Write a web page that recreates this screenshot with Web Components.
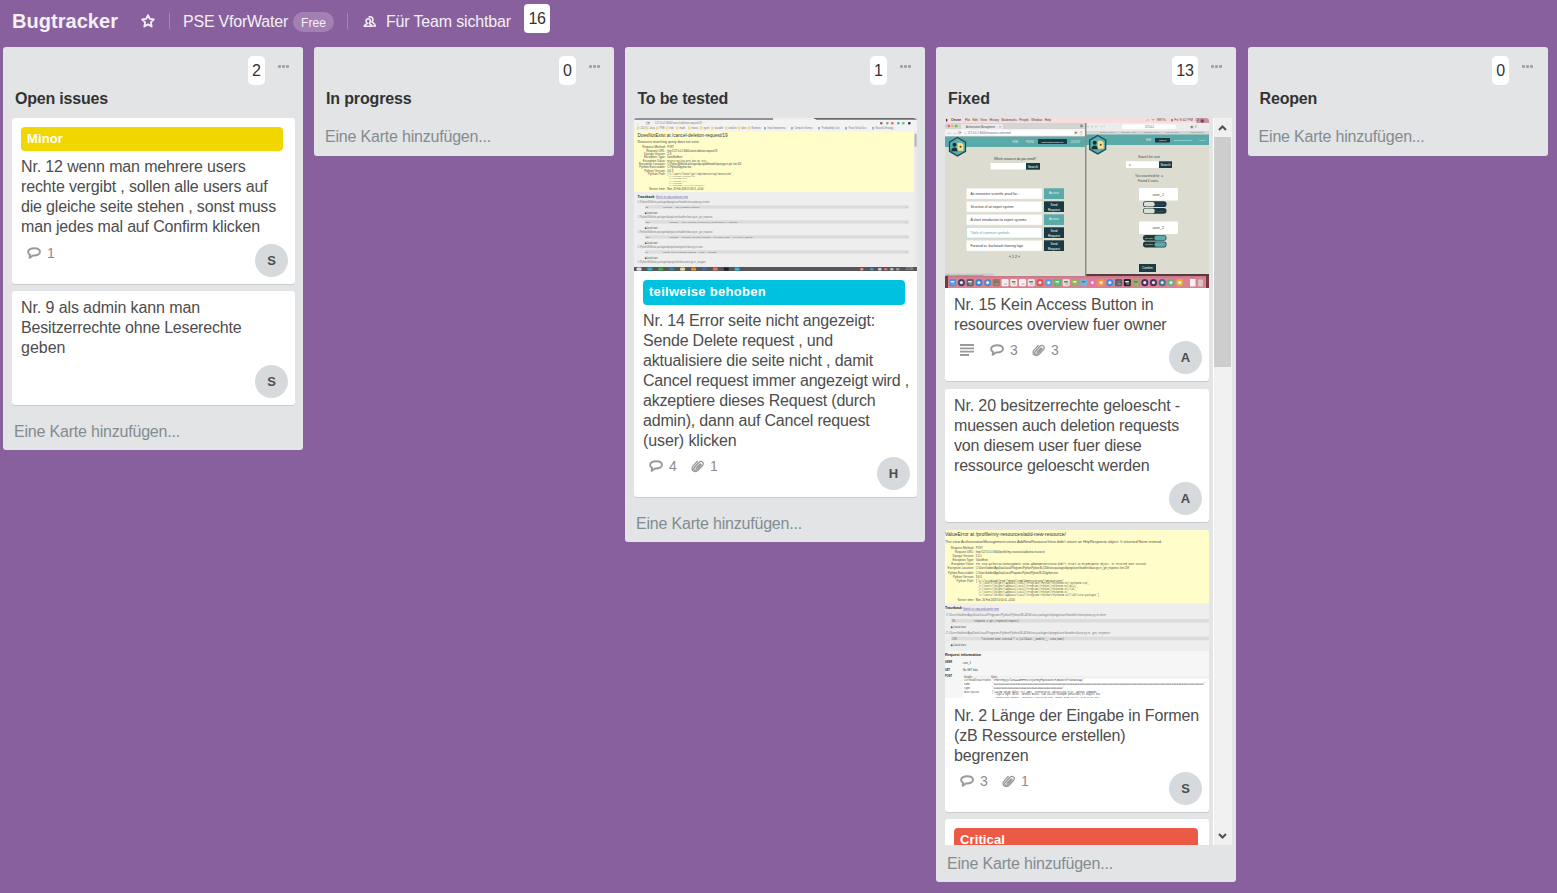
<!DOCTYPE html>
<html lang="de">
<head>
<meta charset="utf-8">
<title>Bugtracker</title>
<style>
html,body{margin:0;height:100%}
body{background:#89609e;font:16px/20px "Liberation Sans",Arial,sans-serif;color:#4d4d4d;overflow:hidden}
</style>
</head>
<body>
<bug-board>
  <board-header slot="header"></board-header>
  <board-list heading="Open issues" hw="93" count="2">
    <board-card h="166" gap="7" label="Minor" lw="36" color="#f2d600" comments="1" member="S">
      <fit-text w="224.5">Nr. 12 wenn man mehrere users</fit-text>
      <fit-text w="246.5">rechte vergibt , sollen alle users auf</fit-text>
      <fit-text w="255">die gleiche seite stehen , sonst muss</fit-text>
      <fit-text w="239">man jedes mal auf Confirm klicken</fit-text>
    </board-card>
    <board-card h="114" member="S">
      <fit-text w="179">Nr. 9 als admin kann man</fit-text>
      <fit-text w="220.5">Besitzerrechte ohne Leserechte</fit-text>
      <fit-text w="44.5">geben</fit-text>
    </board-card>
  </board-list>
  <board-list heading="In progress" hw="85.5" count="0" empty></board-list>
  <board-list heading="To be tested" hw="90.5" count="1" tx="1">
    <board-card h="379" label="teilweise behoben" lw="117" color="#00c2e0" comments="4" files="1" member="H">
      <thumb-deletion slot="cover"></thumb-deletion>
      <fit-text w="232">Nr. 14 Error seite nicht angezeigt:</fit-text>
      <fit-text w="190">Sende Delete request , und</fit-text>
      <fit-text w="230">aktualisiere die seite nicht , damit</fit-text>
      <fit-text w="266">Cancel request immer angezeigt wird ,</fit-text>
      <fit-text w="232.5">akzeptiere dieses Request (durch</fit-text>
      <fit-text w="226.5">admin), dann auf Cancel request</fit-text>
      <fit-text w="93.500">(user) klicken</fit-text>
    </board-card>
  </board-list>
  <board-list heading="Fixed" hw="42" count="13" scroll>
    <board-card h="263" description comments="3" files="3" member="A">
      <thumb-desktop slot="cover"></thumb-desktop>
      <fit-text w="199.5">Nr. 15 Kein Access Button in</fit-text>
      <fit-text w="212.5">resources overview fuer owner</fit-text>
    </board-card>
    <board-card h="133" member="A">
      <fit-text w="226">Nr. 20 besitzerrechte geloescht -</fit-text>
      <fit-text w="225">muessen auch deletion requests</fit-text>
      <fit-text w="187.5">von diesem user fuer diese</fit-text>
      <fit-text w="195.5">ressource geloescht werden</fit-text>
    </board-card>
    <board-card h="282" gap="7" comments="3" files="1" member="S">
      <thumb-value slot="cover"></thumb-value>
      <fit-text w="245">Nr. 2 Länge der Eingabe in Formen</fit-text>
      <fit-text w="171.5">(zB Ressource erstellen)</fit-text>
      <fit-text w="74.5">begrenzen</fit-text>
    </board-card>
    <board-card h="120" label="Critical" lw="45" color="#eb5a46"></board-card>
  </board-list>
  <board-list class="last" heading="Reopen" hw="57.5" count="0" empty></board-list>
</bug-board>
<script>
const shadow = (el, html) => { el.attachShadow({mode: 'open'}).innerHTML = html; };
const attr = (el, n) => el.getAttribute(n);

const star = `<svg width="16" height="16" viewBox="0 0 16 16"><path d="M8 2.1l1.8 3.8 4.1.5-3 2.9.8 4.2L8 11.4l-3.7 2.1.8-4.2-3-2.9 4.1-.5z" fill="none" stroke="#f4f0f6" stroke-width="1.8" stroke-linejoin="round"/></svg>`;
const people = `<svg width="14" height="12" viewBox="0 0 14 12"><g fill="none" stroke="#f4f0f6" stroke-width="1.6" stroke-linejoin="round"><path d="M5.600 1.300C7.200 .2 9.600 .8 9.900 3.200c.1 1.300-.3 2.100-.8 2.900 1.200.9 3 1.300 3.200 3.900H9.900"/><path d="M5.300 2.800c1.500 0 2.200 1 2.100 2.200-.1 1.200-.6 1.900-1.100 2.400.2 1 2.600.8 2.900 2.900H1.200c.3-2.100 2.500-1.900 3-2.900-.6-.5-1-1.200-1.100-2.400 0-1.200.7-2.200 2.200-2.200z"/></g></svg>`;
const comment = `<svg width="14" height="12" viewBox="0 0 14 12"><path d="M7.500 1.200C4 1.200 1.100 2.500 1.100 5c0 1.500.9 2.300 2 2.900L2.600 10.900l3.300-2.400c4.300.3 7.100-1.200 7.100-3.700C13 2.500 10.500 1.200 7.500 1.200z" fill="none" stroke="#999" stroke-width="1.900" stroke-linejoin="round"/></svg>`;
const clip = `<svg width="14" height="14" viewBox="0 0 14 14"><path d="M5 9.300L8.800 5.200c.5-.5 1.500.2 1 .9L5.700 10.700c-1.700 1.500-3.900-.4-2.400-2.200L8 3.300c2.500-2.200 5.500.5 3.500 3.200l-4.400 4.900c-2.600 2.600-6.800.7-5.900-2.900.1-.5.400-1 .8-1.400L6.200 2.500" fill="none" stroke="#999" stroke-width="1.300" stroke-linecap="round"/></svg>`;
const lines = `<svg width="14" height="12" viewBox="0 0 14 12"><path d="M0 1h14M0 4.300h14M0 7.700h14M0 11h9" stroke="#999" stroke-width="1.800"/></svg>`;

class BugBoard extends HTMLElement { constructor(){ super(); shadow(this, `
<style>:host{display:block;height:893px}
.lists{display:flex;align-items:flex-start;gap:11px;padding-left:3px;width:1560px;box-sizing:border-box}
::slotted(.last){margin-left:.6px}</style>
<slot name="header"></slot><div class="lists"><slot></slot></div>`); } }

class BoardHeader extends HTMLElement { constructor(){ super(); shadow(this, `
<style>:host{display:flex;height:47px;align-items:flex-start;color:#f4f0f6;padding-left:12px;box-sizing:border-box}
.t{padding-top:12px}h1{font-size:20px;line-height:20px;margin:0;padding-top:11px;width:128px}
svg{display:block}.star{margin-top:13px;width:29px}
i{width:1px;height:16px;margin-top:13px;background:#a487b4}
.free{margin:12px 13px 0 5px;width:41px;height:20px;border-radius:10px;background:#a280b3;font-size:12px;line-height:22px;display:flex;justify-content:center}
.people{margin:16px 9px 0 15px}
.count{margin:4px 0 0 13px;width:26px;height:29px;line-height:29px;border-radius:4px;background:#fff;color:#333;display:flex;justify-content:center}</style>
<h1><fit-text w="106">Bugtracker</fit-text></h1><span class="star">${star}</span><i></i>
<fit-text class="t" style="margin-left:13px" w="105">PSE VforWater</fit-text><span class="free"><fit-text w="25">Free</fit-text></span><i></i>
<span class="people">${people}</span><fit-text class="t" w="125">Für Team sichtbar</fit-text><span class="count"><fit-text w="17">16</fit-text></span>`); } }

class BoardList extends HTMLElement { constructor(){ super(); const sc = this.hasAttribute('scroll'); shadow(this, `
<style>:host{display:block;width:300px;flex:none;background:#e2e4e6;border-radius:3px}
header{height:71px;display:grid;grid-template-columns:1fr auto 38px;grid-template-rows:38px 1fr;align-items:start}
:host(.last) header{grid-template-columns:1fr auto 38.400px}
.count{margin-top:9px;height:29px;line-height:29px;padding:0 4px;border-radius:5px;background:#fff;color:#333}
.dots{display:flex;gap:1px;margin:18px 0 0 13px}.dots b{width:3px;height:3px;border-radius:1px;background:#a0a2a4}
h2{grid-column:1/-1;margin:4px 0 0 ${attr(this,'tx')?12.5:12}px;font-size:16px;line-height:20px;color:#333}
.body{display:flex;height:${sc?'727px':'auto'};overflow:hidden}
.cards{flex:1;min-width:0;padding:0 ${sc?4:8}px 0 9px}
.bar{width:19px;flex:none;padding-right:1px;margin-right:4px;background:#f0f0f0;display:flex;flex-direction:column;align-items:stretch;border-left:1px solid #fff;box-sizing:border-box}
.bar svg{display:block;height:19px}.thumb{height:230px;background:#cdcdcd}.bar .dn{margin-top:auto}
footer{height:${this.hasAttribute('empty')?29:28}px;padding:9px 0 0 11px;color:#838c91}</style>
<header><span></span><span class="count">${attr(this,'count')}</span><span class="dots"><b></b><b></b><b></b></span>
<h2><fit-text w="${attr(this,'hw')}">${attr(this,'heading')}</fit-text></h2></header>
<div class="body"><div class="cards"><slot></slot></div>
${sc?`<div class="bar"><svg viewBox="0 0 17 19"><path d="M5 12l3.500-3.500 3.500 3.500" fill="none" stroke="#505050" stroke-width="2"/></svg><div class="thumb"></div><svg class="dn" viewBox="0 0 17 19"><path d="M5 8l3.500 3.500L12 8" fill="none" stroke="#505050" stroke-width="2"/></svg></div>`:''}</div>
<footer><fit-text w="166">Eine Karte hinzufügen...</fit-text></footer>`); } }

class BoardCard extends HTMLElement { constructor(){ super(); const a = n => attr(this, n); shadow(this, `
<style>:host{display:flex;flex-direction:column;height:${a('h')}px;margin-bottom:${a('gap')||8}px;background:#fff;border-radius:3px;box-shadow:0 1px 0 #c8cacc;overflow:visible}
.label{margin:9px ${a('label')==='Critical'?11:12}px 0 9px;height:${a('label')==='Minor'?24:25}px;border-radius:4px;background:${a('color')};color:#fff;font-weight:bold;font-size:13px;line-height:24px;padding-left:6px}
.text{padding:${a('label')?'6px':'7px'} 0 0 9px}
.foot{margin-top:auto;display:flex;align-items:flex-start;padding:0 7px 7px 15px}
.b{display:flex;align-items:center;height:17px;color:#8c8c8c;font-size:14px;width:42px;gap:6px}.b.d{width:30px}.b.f{gap:5px}.b svg{flex:none}
.m{margin-left:auto;width:33px;height:33px;border-radius:50%;background:#d6dadc;font:bold 13px/33px "Liberation Sans",sans-serif;text-align:center}</style>
<slot name="cover"></slot>
${a('label')?`<div class="label"><fit-text w="${a('lw')}">${a('label')}</fit-text></div>`:''}
<div class="text"><slot></slot></div>
${a('member')?`<div class="foot">${this.hasAttribute('description')?`<span class="b d">${lines}</span>`:''}${a('comments')?`<span class="b">${comment}<span>${a('comments')}</span></span>`:''}${a('files')?`<span class="b f">${clip}<span>${a('files')}</span></span>`:''}<span class="m">${a('member')}</span></div>`:''}`); } }

/* Preview drawing helpers */
const ink = {'#555':'#404040','#666':'#505050','#777':'#606060','#888':'#787878'};
const R = (x,y,w,h,f,r=0) => `<rect x="${x}" y="${y}" width="${w}" height="${h}" fill="${f}" rx="${r}"/>`;
const T = (x,yc,s,w,t,f='#555',o='') => `<text x="${x}" y="${yc+s*.38}" font-size="${s*1.13}" fill="${ink[f]||f}" ${w?`textLength="${w}" lengthAdjust="spacingAndGlyphs"`:''} ${o}>${t}</text>`;
const mono = 'font-family="Liberation Mono"', bold = 'font-weight="bold"', end = 'text-anchor="end"';
const frame = (w,h,c) => `<style>:host{display:block;height:${h}px;overflow:hidden;border-radius:3px 3px 0 0}svg{display:block;font-family:"Liberation Sans",sans-serif}</style><svg width="${w}" height="${h}" viewBox="0 0 ${w} ${h}">${c}</svg>`;
const names = ['Request Method:','Request URL:','Django Version:','Exception Type:','Exception Value:','Exception Location:','Python Executable:','Python Version:','Python Path:','Server time:'];
const table = (x, ys, vals) => names.map((n,i)=>T(x,ys[i],2.700,0,n,'#666',end)+T(x+1.800,ys[i],2.700,vals[i][1],vals[i][0],'#555',i===4||i===8?mono:'')).join('');

class ThumbDeletion extends HTMLElement { constructor(){ super();
 let c = R(0,0,283,153,'#eee')+R(0,0,283,2,'#929094')+R(139,0,43,2,'#eee')+R(180,0,100,1,'#666')+R(0,2,283,11.500,'#f3f3f3');
 c += T(2,5.300,4,0,'←','#777')+T(12,5.300,4,0,'⟳','#888')+T(21,5.300,2.800,47,'127.0.0.1:8000/cancel-deletion-request/19','#888');
 [[5,'2017'],[14,'Java'],[24,'PSE'],[34,'Info'],[44,'math'],[56,'music'],[68,'sport'],[79,'vocable'],[93,'articles'],[106,'idee'],[116,'Numeric']].forEach(([x,t])=>c+=R(x-2,8.500,2.500,3,'#fbd77c')+T(x+1.500,10.500,2.300,0,t,'#888'));
 [[130,'https://www.mensa'],[157,'Computer Science'],[184,'Probability List'],[211,'Please School Docs'],[238,'Beautiful Strategy']].forEach(([x,t])=>c+=R(x,9,2,2.500,'#8bb8c4')+T(x+3.500,10.500,2.300,18,t,'#888'));
 [[246,'#777'],[252,'#999'],[257,'#e66'],[263,'#3bc'],[268,'#7b8'],[274,'#334']].forEach(([x,f])=>c+=R(x,4,2.600,2.600,f,1));
 c += R(0,13.500,280,60.500,'#fffdc9')+R(280,13.500,3,136,'#eaeaea')+R(280.500,16,2.200,12.500,'#b8b8b8');
 c += T(3.500,17.500,4.800,90,'DoesNotExist at /cancel-deletion-request/19','#333')+T(3.500,24,3.400,62,'Resource matching query does not exist.','#666');
 c += table(31.500,[29.300,32.700,36,39.300,43,46,49.300,53,56.300,71],[['POST',6.500],['http://127.0.0.1:8000/cancel-deletion-request/19',50],['2.0',4],['DoesNotExist',15],['Resource matching query does not exist.',40],['C:\\Python36\\lib\\site-packages\\django\\db\\models\\query.py in get, line 403',74],['C:\\Python36\\python.exe',24],['3.6.3',6],["['C:\\\\Users\\\\heinz\\\\git\\\\implementierung\\\\ResourceMS',",66],['Mon, 26 Feb 2018 21:58:11 +0100',36]]);
 [["'C:\\\\Python36\\\\python36.zip',",28],["'C:\\\\Python36\\\\DLLs',",20],["'C:\\\\Python36\\\\lib',",19],["'C:\\\\Python36',",15],["'C:\\\\Python36\\\\lib\\\\site-packages']",36]].forEach(([t,w],i)=>c+=T(34.500,58.500+i*2.200,2.100,w,t,'#777',mono));
 c += T(3.500,78.200,3.800,17,'Traceback','#222',bold)+T(22,78.700,2.700,32,'Switch to copy-and-paste view','#6665a8','text-decoration="underline"');
 [['C:\\Python36\\lib\\site-packages\\django\\core\\handlers\\exception.py in inner',72,'35.','response = get_response(request)',29,37],['C:\\Python36\\lib\\site-packages\\django\\core\\handlers\\base.py in _get_response',75,'128.','response = self.process_exception_by_middleware(e, request)',35,69],['C:\\Python36\\lib\\site-packages\\django\\core\\handlers\\base.py in _get_response',75,'126.','response = wrapped_callback(request, *callback_args, **callback_kwargs)',35,84],['C:\\Python36\\lib\\site-packages\\django\\views\\generic\\base.py in view',65,'69.','return self.dispatch(request, *args, **kwargs)',29,54]].forEach(([p,w,n,t,x,tw],i)=>{const y=84.300+15*i;c+=T(3.500,y,2.300,w,p,'#888')+R(11,y+2.900,264,3.400,'#dcdcdc')+T(11.500,y+4.800,2.200,0,n,'#777')+T(x,y+4.800,2.200,tw,t,'#666',mono)+T(271,y+4.500,2.500,0,'...','#888')+T(10.500,y+10.400,2.600,13,'▶ Local vars','#555');});
 c += T(3.500,144.300,2.300,68,'C:\\Python36\\lib\\site-packages\\django\\utils\\decorators.py in _wrapper','#888');
 c += R(0,149,283,4,'#56565a');
 ['#ddd','#29a8d2','#35aa3d','#2a86a8','#e0d49a','#e08b31','#3d6ca8','#e0705a','#222','#31b4e4'].forEach((f,i)=>c+=R(2.500+i*10.900,149.500,5,3.200,f,1));
 [['#e88',226],['#49c',236],['#ccc',244],['#d66',250],['#bbb',256],['#999',262]].forEach(([f,x])=>c+=R(x,150,3.500,2.500,f,1)); c+=T(272,151,2.400,0,'21:58','#ccc');
 shadow(this, frame(283,153,c)); } }

const logo = (x,y) => `<g transform="translate(${x} ${y})"><path d="M0-9.200l8 4.600v9.200L0 9.200l-8-4.600v-9.200z" fill="#5dadab" stroke="#1b4b57" stroke-width="1.300"/><circle cx="-3" cy="-2" r="2" fill="#12333d"/><path d="M-6.300 4.500c0-5 6.600-5 6.600 0z" fill="#12333d"/><path d="M0-4h4l2 2v6H0z" fill="#f6df8b"/><circle cx="3" cy="0" r="1" fill="#544"/></g>`;
const dark = '#1c3a42', teal = '#59aaa9';

class ThumbDesktop extends HTMLElement { constructor(){ super();
 let c = R(0,0,264,170,'#d9a3a8')+R(0,0,264,5,'#f3dfdf')+R(252,0,12,5,'#d0929c');
 c += R(1,1,1.300,2.500,'#333')+T(6,2.200,2.900,10,'Chrome','#333',bold)+T(20,2.200,2.900,86,'File   Edit   View   History   Bookmarks   People   Window   Help','#555','xml:space="preserve"')+T(201,2.200,3,20,'∩ ᯤ 98%','#755')+T(226,2.200,3,22,'▮ Fri 9:42 PM','#644')+T(250,2.300,4,0,'⚲ ◉','#546');
 c += R(141,5,123,152,'#dcddd0')+R(141,5,123,8,'#ececec')+R(141,13,123,3.500,'#d6d6d6');
 [143,147,151].forEach(x=>c+=`<circle cx="${x}" cy="8.500" r="1" fill="#ccc"/>`);
 c += T(156,8.500,3.500,0,'‹  ›','#999')+R(177,6.500,54,4.500,'#fff',1)+T(200,8.700,2.500,9,'127.0.0.1','#555')+T(245,8.500,3.500,0,'◉ ⇧','#888');
 [[155,'Search | Trello'],[176,'GitHub - proj'],[199,'Search | Trello'],[221,'gd 404 dpo...'],[244,'Authorization']].forEach(([x,t])=>c+=T(x,14.600,2.200,15,t,'#888'));
 c += R(141,16.500,123,10.500,teal)+T(201,22,2.300,5,'HOME','#eee')+R(210,20,15,4.500,dark)+T(214,22.200,2.200,7,'PROFILE','#fff')+T(229,22,2.200,18,'RESOURCES OVERVIEW','#dff')+T(254,22,2.200,6.500,'LOG OUT','#dff')+logo(152.700,26.700);
 c += T(193,38.700,3,22,'Search for user','#444')+R(181,43.300,33,6.700,'#fff')+T(184,46.700,2.600,0,'a','#555')+R(214,43.300,13,6.700,dark)+T(215.500,46.700,2.900,10,'Search','#fff')+T(190,58,3,28,'You searched for: a','#444')+T(193,62.500,3,21,'Found 4 users.','#444');
 c += R(194,70,39,12.500,'#fff')+T(207.500,76.500,3.400,11.500,'user_1','#444')+R(194,103.500,39,12.500,'#fff')+T(207.500,109.800,3.400,11.500,'user_2','#444');
 [[83.300,0],[90,0],[117,1],[123.600,1]].forEach(([y,on],i)=>c+=R(198,y,23.500,5.800,dark,2.700)+(on?R(209.500,y+.6,11.300,4.600,teal,2):R(198.700,y+.6,11,4.600,'#dedfd4',2))+T(on?200:211,y+3,2,8,i%2?'OWNER':'READER',on?'#e8e49b':'#52727a'));
 c += R(194,146,17,8,dark)+T(197,150.200,3,11,'Confirm','#fff')+R(141,156,123,2,'#5b3a40');
 c += R(140,5,1.500,153,'#8b8b83')+R(0,5,140,6,'#d4d4d4')+R(16,6,42,5,'#e9e9e9',1)+R(0,11,140,7.500,'#f2f2f2');
 [['#ee5c52',3.800],['#efbd3e',7.500],['#4fc354',11.200]].forEach(([f,x])=>c+=`<circle cx="${x}" cy="8" r="1.300" fill="${f}"/>`);
 c += T(21,8.500,2.700,29,'Authorization Management','#444')+T(54,8.500,3,0,'×','#777')+`<circle cx="136.500" cy="8" r="1.400" fill="#888"/>`+T(2,14.700,3.500,14,'← → ⟳','#888')+R(17,12.500,112,4.500,'#fff',1)+T(19,14.700,2.700,47,'ⓘ 127.0.0.1:8000/resources-overview/','#777')+T(129,14.700,3.500,0,'★ ⋮','#777');
 c += R(0,18.500,140,10.500,teal)+R(0,29,140,129,'#dcddd0')+T(67.500,23.700,2.300,5.500,'HOME','#eee')+T(81,23.700,2.300,8,'PROFILE','#eee')+R(93,21,29,5,dark)+T(96.500,23.700,2.200,22,'RESOURCES OVERVIEW','#fff')+T(126,23.700,2.300,9,'LOG OUT','#eee')+logo(12.500,28.700);
 c += T(49,40.300,3.200,42,'Which resource do you need?','#333')+R(45.500,45,36,6.500,'#fff')+R(81,45,14,6.700,dark)+T(83,48.500,3,10,'Search','#fff');
 [['An innovative scientific proof for...',49,1],['Structure of an expert system',43,0],['A short introduction to expert systems',56,1],['Table of common symbols',39,0],['Forward vs. backward chaining logic',53,0]].forEach(([t,w,g],i)=>{const y=70.300+13*i;c+=`<rect x="21.500" y="${y}" width="75.500" height="10.700" fill="#fff" stroke="${i===3?'#a9d2d0':'#e8e8e0'}" stroke-width=".5"/>`+T(25.500,y+5.700,3.200,w,t,i===3?teal:'#333')+R(99,y,20,10.700,g?teal:dark)+(g?T(104,y+4.300,3,10,'Access','#eaf5f5'):T(105.500,y+4,2.900,7,'Send','#fff')+T(103,y+8.600,2.900,12,'Request','#fff'));});
 c += T(64,138.300,3.500,11,'« 1 2 »','#333')+R(0,155.500,49,2.500,'#c9c9c9')+T(1,156.800,2.200,38,'127.0.0.1:8000/resources-overview/#','#666');
 c += R(0,158,264,12,'#db8292')+R(0,158,264,1.500,'#c5798a')+R(0,158,3,12,'#77383f')+R(261,158,3,12,'#77383f');
 const F=['#3b9be8','#44416c','#5a6468','#2c86cf','#4e8bc4','#9b7a4e','#efefef','#f5f0da','#f6f6f6','#e9e9e2','#d65555','#49a1ea','#49c06b','#e4ded7','#8ab551','#6fb4dc','#eb6ca9','#f39a37','#358fe6','#5c5e65','#24272b','#93b05a','#3a3463','#493061','#347590','#5ab685','#e6b33b'];
 F.forEach((f,i)=>{const x=7.700+i*8.730,r=[1,3,4,10,11,16,17,18,22,23,24,25,26].includes(i);c+=R(x-3.500,161,7,7.200,f,r?3.500:1.200)+(r?`<circle cx="${x}" cy="164.600" r="1.600" fill="#e8e8ee"/>`:R(x-2,163,3.600,1.500,i%2?'#5178a0':'#eee')+R(x-1,165.500,3,1,'#aab'));});
 c += R(245,161,5.500,7.500,'#f5f0f1')+R(253,161.500,5,7,'#d4c5c9',1);
 shadow(this, frame(264,170,c)); } }

class ThumbValue extends HTMLElement { constructor(){ super();
 let c = R(0,0,264,168,'#eee')+R(0,0,264,73.300,'#fffdc9');
 c += T(0,4.500,4.800,121,'ValueError at /profile/my-resources/add-new-resource/','#333')+T(0,11.700,3.400,217,"The view AuthorizationManagement.views.AddNewResourceView didn't return an HttpResponse object. It returned None instead.",'#666');
 c += table(29,[17.700,21.700,26,30,34.300,38.300,42.700,46.700,50.700,69.700],[['POST',7],['http://127.0.0.1:8000/profile/my-resources/add-new-resource/',69],['2.0.1',6],['ValueError',12],["The view AuthorizationManagement.views.AddNewResourceView didn't return an HttpResponse object. It returned None instead.",171],['C:\\Users\\holden\\AppData\\Local\\Programs\\Python\\Python36-32\\lib\\site-packages\\django\\core\\handlers\\base.py in _get_response, line 139',153],['C:\\Users\\holden\\AppData\\Local\\Programs\\Python\\Python36-32\\python.exe',82],['3.6.3',6],["['C:\\\\Studium\\\\PSE\\\\Repo\\\\Implementierung\\\\ResourceMS',",90],['Mon, 26 Feb 2018 10:54:01 +0100',39]]);
 [['\\\\python36.zip',112],['\\\\DLLs',100],['\\\\lib',99],['',92],['\\\\lib\\\\site-packages',121]].forEach(([t,w],i)=>c+=T(33,53.500+i*2.950,2.400,w,`'C:\\\\Users\\\\holden\\\\AppData\\\\Local\\\\Programs\\\\Python\\\\Python36-32${t}'${i===4?']':','}`,'#666',mono));
 c += T(0,78,3.800,17,'Traceback','#222',bold)+T(18,78.700,2.800,36,'Switch to copy-and-paste view','#6665a8','text-decoration="underline"');
 [[85,'exception.py in inner',160,'35.','response = get_response(request)',29,45],[102.700,'base.py in _get_response',164,'139.','"returned None instead." % (callback.__module__, view_name)',36,83]].forEach(([y,t,w,n,s,x,sw])=>c+=T(1,y,2.400,w,'C:\\Users\\holden\\AppData\\Local\\Programs\\Python\\Python36-32\\lib\\site-packages\\django\\core\\handlers\\'+t,'#888','font-style="italic"')+R(6,y+4,258,3.600,'#dcdcdc')+T(7,y+5.900,2.400,0,n,'#777')+T(x,y+5.900,2.400,sw,s,'#666',mono)+T(6,y+11.800,2.700,15,'▶ Local vars','#555'));
 c += R(0,121,264,47,'#f6f6f6')+T(0,125,3.800,36,'Request information','#222',bold)+T(0,132.400,2.800,7,'USER','#222',bold)+T(18,132.800,2.600,8,'user_1','#555')+T(0,139.500,2.800,5,'GET','#222',bold)+T(18,139.700,2.600,15,'No GET data','#555')+T(0,146.300,2.800,7,'POST','#222',bold);
 c += R(18,145.500,246,22.500,'#fff')+R(18,145.500,246,3,'#f0f0f0')+T(19,147,2.300,8,'Variable','#666')+T(46,147,2.300,6,'Value','#666');
 c += T(19,150.300,2.400,27,'csrfmiddlewaretoken','#555',mono)+T(47,150.300,2.400,92,"'tPbeYM5QujzlW3iAaWBHPHnzL8jUcHKQFkpZK6zDYzPaBWIKrKfYuz0UOVUAy'",'#555',mono);
 c += T(19,154.400,2.400,6,'name','#555',mono)+T(47,154.400,2.400,213,"'"+'a'.repeat(125)+"'",'#555',mono)+T(19,158.200,2.400,6,'type','#555',mono)+T(47,158.200,2.400,72,"'"+'a'.repeat(44)+"'",'#555',mono);
 c += T(19,161.700,2.400,15,'description','#555',mono)+T(47,161.700,2.400,107,"('Lorem ipsum dolor sit amet, consectetur adipiscing elit. Aenean commodo '",'#555',mono)+T(49,164.500,2.400,109,"'ligula eget dolor. Aenean massa. Cum sociis natoque penatibus et magnis dis '",'#555',mono)+T(49,167,2.200,109,"'parturient montes, nascetur ridiculus mus. Donec quam felis, ultricies nec, '",'#555',mono);
 shadow(this, frame(264,168,c)+'<style>:host{margin-bottom:1px}</style>'); } }

/* A single line of text, tracked to an exact advance width. */
class FitText extends HTMLElement {
 constructor(){ super(); shadow(this, `<style>:host{display:block;white-space:nowrap}span{display:inline-block}</style><span><slot></slot></span>`); }
 connectedCallback(){ const s = this.shadowRoot.querySelector('span'); s.style.letterSpacing = '0';
  const d = (+attr(this,'w') - s.getBoundingClientRect().width) / this.textContent.length; s.style.letterSpacing = d.toFixed(3)+'px'; } }

[['bug-board',BugBoard],['board-header',BoardHeader],['board-list',BoardList],['board-card',BoardCard],['thumb-deletion',ThumbDeletion],['thumb-desktop',ThumbDesktop],['thumb-value',ThumbValue],['fit-text',FitText]].forEach(([n,c])=>customElements.define(n,c));
</script>
</body>
</html>
